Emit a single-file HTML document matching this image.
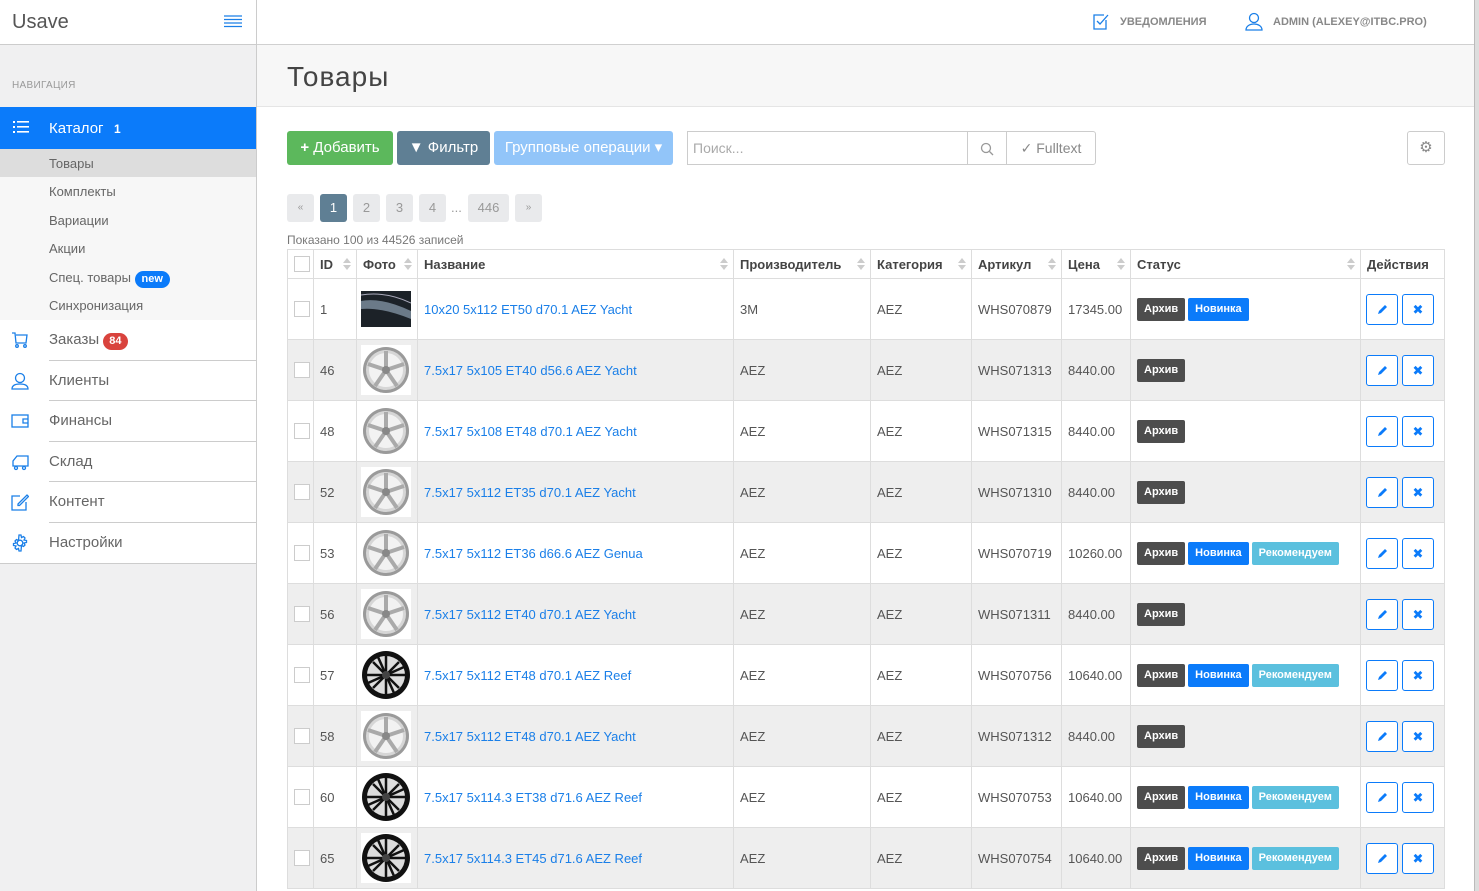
<!DOCTYPE html>
<html><head><meta charset="utf-8"><style>
*{box-sizing:border-box;margin:0;padding:0}
body{width:1479px;height:891px;overflow:hidden;font-family:"Liberation Sans","DejaVu Sans",sans-serif;background:#fff;position:relative;color:#555}
.abs{position:absolute}
#side{left:0;top:0;width:257px;height:891px;background:#f0f0f1;border-right:1px solid #ccc}
#logo{left:0;top:0;width:256px;height:45px;background:#fff;border-bottom:1px solid #ccc}
#top{left:257px;top:0;width:1217px;height:45px;border-bottom:1px solid #d0d0d0;background:#fff}
.sub{position:absolute;left:0;width:256px;height:29px;font-size:13px;color:#666;padding-left:49px;line-height:29px;background:#f7f7f7}
.mi{position:absolute;left:0;width:256px;height:41px;background:#fff;font-size:15px;color:#666;line-height:40px}
.mi span.t{position:absolute;left:49px}
.hl{position:absolute;left:49px;width:207px;height:1px;background:#ccc}
.mi svg{position:absolute;left:11px;top:11px}
.btn{position:absolute;top:131px;height:34px;border-radius:3px;color:#fff;font-size:15px;line-height:34px;text-align:center}
.pg{position:absolute;top:194px;height:28px;background:#e9eaec;border-radius:3px;color:#999;font-size:13px;line-height:28px;text-align:center}
table{position:absolute;left:287px;top:249px;border-collapse:collapse;table-layout:fixed;width:1157px;font-size:13px}
td,th{border:1px solid #ddd;padding:0 6px;text-align:left;vertical-align:middle;white-space:nowrap;overflow:hidden}
th{height:29px;font-weight:bold;color:#444;position:relative}
td{height:61px;color:#555}
tr:nth-child(odd) td{background:#eee}
tr.h th{background:#fff}
.cb{display:inline-block;width:16px;height:16px;border:1px solid #ccc;background:#fff;vertical-align:middle}
.sort{position:absolute;right:5px;top:8px;width:8px;height:14px}
.sort:before{content:"";position:absolute;left:0;top:0;border:4px solid transparent;border-bottom:5px solid #ccc;border-top:0}
.sort:after{content:"";position:absolute;left:0;top:7px;border:4px solid transparent;border-top:5px solid #ccc;border-bottom:0}
a{color:#1a7fe8;text-decoration:none}
.lb{display:inline-block;font-size:11px;font-weight:bold;color:#fff;padding:0 7px;height:23px;line-height:23px;border-radius:2px;margin-right:3px}
.ar{background:#4d4d4d}.nw{background:#0b7bfa}.rc{background:#5bc0de}
.ab{display:inline-block;width:32px;height:31px;border:1px solid #0b7bfa;border-radius:3px;background:#fff;color:#0b7bfa;text-align:center;line-height:29px;font-size:13px;margin-right:4px;vertical-align:middle;font-weight:bold}
.ab svg{vertical-align:middle;margin-top:-2px}
.im{display:block;width:50px;height:50px}
td.act{padding-left:5px}
</style></head><body>
<svg width="0" height="0" style="position:absolute">
<defs>
<g id="ws"><rect width="50" height="50" fill="#fff"/><circle cx="25" cy="25" r="23" fill="#9a9a9a"/><circle cx="25" cy="25" r="20" fill="#d6d6d6"/><circle cx="25" cy="25" r="17" fill="#f2f2f2"/><g stroke="#aaa" stroke-width="4"><line x1="25" y1="25" x2="25" y2="6"/><line x1="25" y1="25" x2="43" y2="19"/><line x1="25" y1="25" x2="36" y2="41"/><line x1="25" y1="25" x2="14" y2="41"/><line x1="25" y1="25" x2="7" y2="19"/></g><circle cx="25" cy="25" r="4" fill="#888"/></g>
<g id="wb"><rect width="50" height="50" fill="#fff"/><circle cx="25" cy="25" r="24" fill="#111"/><circle cx="25" cy="25" r="19" fill="#ddd"/><g stroke="#111" stroke-width="2.5"><line x1="25" y1="6" x2="25" y2="44"/><line x1="6" y1="25" x2="44" y2="25"/><line x1="12" y1="12" x2="38" y2="38"/><line x1="38" y1="12" x2="12" y2="38"/><line x1="17" y1="7" x2="33" y2="43"/><line x1="7" y1="33" x2="43" y2="17"/></g><circle cx="25" cy="25" r="4" fill="#444"/></g>
<g id="pen"><path d="M1 11l1-3 6-6 2 2-6 6z" fill="#0b7bfa"/></g>
</defs></svg>

<div id="side" class="abs">
<div id="logo" class="abs"><span class="abs" style="left:12px;top:11px;font-size:20px;color:#555">Usave</span>
<svg class="abs" style="left:224px;top:15px" width="18" height="13"><g stroke="#1a7fe8" stroke-width="1.2"><line x1="0" y1="1" x2="18" y2="1"/><line x1="0" y1="4.5" x2="18" y2="4.5"/><line x1="0" y1="8" x2="18" y2="8"/><line x1="0" y1="11.5" x2="18" y2="11.5"/></g></svg></div>
<div class="abs" style="left:12px;top:80px;font-size:10px;color:#999;letter-spacing:.3px">НАВИГАЦИЯ</div>
<div class="abs" style="left:0;top:107px;width:256px;height:42px;background:#0b7bfa;color:#fff;font-size:15px;line-height:42px">
<svg class="abs" style="left:13px;top:14px" width="16" height="13"><g fill="#fff"><rect x="0" y="0" width="2" height="2"/><rect x="0" y="5" width="2" height="2"/><rect x="0" y="10" width="2" height="2"/><rect x="4" y="0" width="12" height="1.6"/><rect x="4" y="5" width="12" height="1.6"/><rect x="4" y="10" width="12" height="1.6"/></g></svg>
<span class="abs" style="left:49px;top:1px">Каталог</span><span class="abs" style="left:114px;top:1px;font-size:12px;font-weight:bold">1</span></div>
<div class="sub" style="top:149px;background:#ddd">Товары</div>
<div class="sub" style="top:177px">Комплекты</div>
<div class="sub" style="top:206px">Вариации</div>
<div class="sub" style="top:234px">Акции</div>
<div class="sub" style="top:263px">Спец. товары <span style="display:inline-block;background:#0b7bfa;color:#fff;font-weight:bold;font-size:11px;border-radius:9px;padding:0 7px;line-height:17px">new</span></div>
<div class="sub" style="top:291px">Синхронизация</div>
<div class="mi" style="top:320px"><svg width="18" height="18"><g fill="none" stroke="#1a7fe8" stroke-width="1.3"><path d="M1 2h3l1 10h10l1-8H5"/><circle cx="6" cy="15" r="1.3"/><circle cx="14" cy="15" r="1.3"/></g></svg><span class="t">Заказы <span style="display:inline-block;background:#d9433d;color:#fff;font-weight:bold;font-size:11px;border-radius:9px;padding:0 6px;line-height:17px">84</span></span></div>
<div class="mi" style="top:361px"><svg width="18" height="18"><g fill="none" stroke="#1a7fe8" stroke-width="1.3"><circle cx="9" cy="6" r="4.5"/><path d="M1 17c0-4 4-5 8-5s8 1 8 5z"/></g></svg><span class="t">Клиенты</span></div>
<div class="mi" style="top:401px"><svg width="18" height="18"><g fill="none" stroke="#1a7fe8" stroke-width="1.3"><rect x="1" y="3" width="16" height="12"/><path d="M17 7h-5v4h5"/></g></svg><span class="t">Финансы</span></div>
<div class="mi" style="top:442px"><svg width="18" height="18"><g fill="none" stroke="#1a7fe8" stroke-width="1.3"><path d="M6 3h11v10H2V8l4-5z"/><circle cx="5" cy="15" r="1.5"/><circle cx="13" cy="15" r="1.5"/></g></svg><span class="t">Склад</span></div>
<div class="mi" style="top:482px"><svg width="18" height="18"><g fill="none" stroke="#1a7fe8" stroke-width="1.3"><path d="M9 3H1v14h14V9"/><path d="M7 11l9-9 1.5 1.5-9 9H7z"/></g></svg><span class="t">Контент</span></div>
<div class="mi" style="top:523px;border-bottom:1px solid #ccc;height:41px"><svg width="18" height="18"><g fill="none" stroke="#1a7fe8" stroke-width="1.3"><circle cx="9" cy="9" r="2.8"/><path d="M8 1h2l.5 2.5 2-1 1.5 1.5-1 2 2.5.5v2l-2.5.5 1 2-1.5 1.5-2-1L10 17H8l-.5-2.5-2 1L4 14l1-2-2.5-.5v-2L5 9 4 7l1.5-1.5 2 1z"/></g></svg><span class="t">Настройки</span></div>
<div class="hl" style="top:360px"></div><div class="hl" style="top:400px"></div><div class="hl" style="top:441px"></div><div class="hl" style="top:481px"></div><div class="hl" style="top:522px"></div>
</div>

<div id="top" class="abs">
<svg class="abs" style="left:836px;top:13px" width="16" height="17"><g fill="none" stroke="#1a7fe8" stroke-width="1.3"><path d="M13 7v9H1V2h10"/><path d="M4 8l3 3 8-9"/></g></svg>
<span class="abs" style="left:863px;top:16px;font-size:11px;font-weight:bold;color:#888">УВЕДОМЛЕНИЯ</span>
<svg class="abs" style="left:988px;top:12px" width="18" height="19"><g fill="none" stroke="#1a7fe8" stroke-width="1.3"><circle cx="9" cy="6" r="4.5"/><path d="M1 18c0-4 4-6 8-6s8 2 8 6z"/></g></svg>
<span class="abs" style="left:1016px;top:16px;font-size:11px;font-weight:bold;color:#888">ADMIN (ALEXEY@ITBC.PRO)</span>
</div>
<div class="abs" style="left:1474px;top:0;width:5px;height:891px;background:#ddd;border-left:1px solid #bbb"></div>
<div class="abs" style="left:257px;top:45px;width:1217px;height:62px;background:#f7f7f7;border-bottom:1px solid #e5e5e5"></div>
<div class="abs" style="left:287px;top:61px;font-size:28px;color:#444;letter-spacing:1px">Товары</div>

<div class="btn" style="left:287px;width:106px;background:#5cb85c"><b>+</b> Добавить</div>
<div class="btn" style="left:397px;width:93px;background:#5f7f94">▼ Фильтр</div>
<div class="btn" style="left:494px;width:179px;background:#92c5f9">Групповые операции ▾</div>
<div class="abs" style="left:687px;top:131px;width:281px;height:34px;border:1px solid #ccc;font-size:14px;color:#aaa;line-height:32px;padding-left:5px">Поиск...</div>
<div class="abs" style="left:967px;top:131px;width:40px;height:34px;border:1px solid #ccc;"><svg style="margin:10px 12px" width="14" height="14"><g fill="none" stroke="#999" stroke-width="1.3"><circle cx="6" cy="6" r="4.5"/><line x1="9.5" y1="9.5" x2="13" y2="13"/></g></svg></div>
<div class="abs" style="left:1006px;top:131px;width:90px;height:34px;border:1px solid #ccc;border-radius:0 3px 3px 0;font-size:14px;color:#888;line-height:32px;text-align:center">✓ Fulltext</div>
<div class="abs" style="left:1407px;top:131px;width:38px;height:34px;border:1px solid #ccc;border-radius:3px;text-align:center;line-height:32px;color:#888;font-size:15px">⚙</div>

<div class="pg" style="left:287px;width:27px;font-size:10px">«</div>
<div class="pg" style="left:320px;width:27px;background:#5f7f94;color:#fff">1</div>
<div class="pg" style="left:353px;width:27px">2</div>
<div class="pg" style="left:386px;width:27px">3</div>
<div class="pg" style="left:419px;width:27px">4</div>
<div class="abs" style="left:451px;top:200px;color:#999;font-size:13px">...</div>
<div class="pg" style="left:468px;width:41px">446</div>
<div class="pg" style="left:515px;width:27px;font-size:10px">»</div>
<div class="abs" style="left:287px;top:233px;font-size:12px;color:#777">Показано 100 из 44526 записей</div>

<table>
<colgroup><col style="width:26px"><col style="width:43px"><col style="width:61px"><col style="width:316px"><col style="width:137px"><col style="width:101px"><col style="width:90px"><col style="width:69px"><col style="width:230px"><col style="width:84px"></colgroup>
<tr class="h"><th><span class="cb"></span></th><th>ID<i class="sort"></i></th><th>Фото<i class="sort"></i></th><th>Название<i class="sort"></i></th><th>Производитель<i class="sort"></i></th><th>Категория<i class="sort"></i></th><th>Артикул<i class="sort"></i></th><th>Цена<i class="sort"></i></th><th>Статус<i class="sort"></i></th><th>Действия</th></tr>
<tr><td><span class="cb"></span></td><td>1</td><td style="padding:0 4px"><svg class="im" viewBox="0 0 50 36" style="height:36px"><rect width="50" height="36" fill="#1c2228"/><path d="M0 10 Q20 6 50 20 L50 28 Q20 16 0 18z" fill="#6b7a88"/><path d="M0 4 Q25 0 50 12" stroke="#aab" stroke-width="1" fill="none"/></svg></td><td><a>10x20 5x112 ET50 d70.1 AEZ Yacht</a></td><td>3M</td><td>AEZ</td><td>WHS070879</td><td>17345.00</td><td><span class="lb ar">Архив</span><span class="lb nw">Новинка</span></td><td class="act"><span class="ab"><svg width="11" height="12"><use href="#pen"/></svg></span><span class="ab">✖</span></td></tr>
<tr><td><span class="cb"></span></td><td>46</td><td style="padding:0 4px"><svg class="im"><use href="#ws"/></svg></td><td><a>7.5x17 5x105 ET40 d56.6 AEZ Yacht</a></td><td>AEZ</td><td>AEZ</td><td>WHS071313</td><td>8440.00</td><td><span class="lb ar">Архив</span></td><td class="act"><span class="ab"><svg width="11" height="12"><use href="#pen"/></svg></span><span class="ab">✖</span></td></tr>
<tr><td><span class="cb"></span></td><td>48</td><td style="padding:0 4px"><svg class="im"><use href="#ws"/></svg></td><td><a>7.5x17 5x108 ET48 d70.1 AEZ Yacht</a></td><td>AEZ</td><td>AEZ</td><td>WHS071315</td><td>8440.00</td><td><span class="lb ar">Архив</span></td><td class="act"><span class="ab"><svg width="11" height="12"><use href="#pen"/></svg></span><span class="ab">✖</span></td></tr>
<tr><td><span class="cb"></span></td><td>52</td><td style="padding:0 4px"><svg class="im"><use href="#ws"/></svg></td><td><a>7.5x17 5x112 ET35 d70.1 AEZ Yacht</a></td><td>AEZ</td><td>AEZ</td><td>WHS071310</td><td>8440.00</td><td><span class="lb ar">Архив</span></td><td class="act"><span class="ab"><svg width="11" height="12"><use href="#pen"/></svg></span><span class="ab">✖</span></td></tr>
<tr><td><span class="cb"></span></td><td>53</td><td style="padding:0 4px"><svg class="im"><use href="#ws"/></svg></td><td><a>7.5x17 5x112 ET36 d66.6 AEZ Genua</a></td><td>AEZ</td><td>AEZ</td><td>WHS070719</td><td>10260.00</td><td><span class="lb ar">Архив</span><span class="lb nw">Новинка</span><span class="lb rc">Рекомендуем</span></td><td class="act"><span class="ab"><svg width="11" height="12"><use href="#pen"/></svg></span><span class="ab">✖</span></td></tr>
<tr><td><span class="cb"></span></td><td>56</td><td style="padding:0 4px"><svg class="im"><use href="#ws"/></svg></td><td><a>7.5x17 5x112 ET40 d70.1 AEZ Yacht</a></td><td>AEZ</td><td>AEZ</td><td>WHS071311</td><td>8440.00</td><td><span class="lb ar">Архив</span></td><td class="act"><span class="ab"><svg width="11" height="12"><use href="#pen"/></svg></span><span class="ab">✖</span></td></tr>
<tr><td><span class="cb"></span></td><td>57</td><td style="padding:0 4px"><svg class="im"><use href="#wb"/></svg></td><td><a>7.5x17 5x112 ET48 d70.1 AEZ Reef</a></td><td>AEZ</td><td>AEZ</td><td>WHS070756</td><td>10640.00</td><td><span class="lb ar">Архив</span><span class="lb nw">Новинка</span><span class="lb rc">Рекомендуем</span></td><td class="act"><span class="ab"><svg width="11" height="12"><use href="#pen"/></svg></span><span class="ab">✖</span></td></tr>
<tr><td><span class="cb"></span></td><td>58</td><td style="padding:0 4px"><svg class="im"><use href="#ws"/></svg></td><td><a>7.5x17 5x112 ET48 d70.1 AEZ Yacht</a></td><td>AEZ</td><td>AEZ</td><td>WHS071312</td><td>8440.00</td><td><span class="lb ar">Архив</span></td><td class="act"><span class="ab"><svg width="11" height="12"><use href="#pen"/></svg></span><span class="ab">✖</span></td></tr>
<tr><td><span class="cb"></span></td><td>60</td><td style="padding:0 4px"><svg class="im"><use href="#wb"/></svg></td><td><a>7.5x17 5x114.3 ET38 d71.6 AEZ Reef</a></td><td>AEZ</td><td>AEZ</td><td>WHS070753</td><td>10640.00</td><td><span class="lb ar">Архив</span><span class="lb nw">Новинка</span><span class="lb rc">Рекомендуем</span></td><td class="act"><span class="ab"><svg width="11" height="12"><use href="#pen"/></svg></span><span class="ab">✖</span></td></tr>
<tr><td><span class="cb"></span></td><td>65</td><td style="padding:0 4px"><svg class="im"><use href="#wb"/></svg></td><td><a>7.5x17 5x114.3 ET45 d71.6 AEZ Reef</a></td><td>AEZ</td><td>AEZ</td><td>WHS070754</td><td>10640.00</td><td><span class="lb ar">Архив</span><span class="lb nw">Новинка</span><span class="lb rc">Рекомендуем</span></td><td class="act"><span class="ab"><svg width="11" height="12"><use href="#pen"/></svg></span><span class="ab">✖</span></td></tr>
</table>
</body></html>
